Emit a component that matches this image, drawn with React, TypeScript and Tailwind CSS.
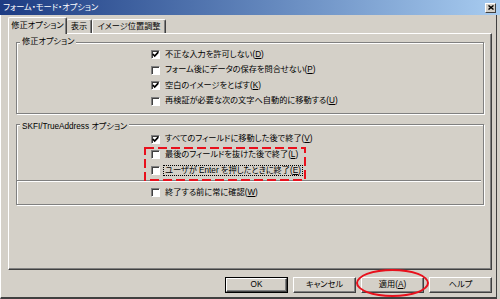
import React from "react";

const Check = ({ on }: { on?: boolean }) => (
  <span className="flex h-[9px] w-[9px] shrink-0 items-center justify-center border border-b-white border-l-[#808080] border-r-white border-t-[#808080] bg-white shadow-[inset_1px_1px_0_#404040]">
    {on && (
      <svg width="7" height="7" viewBox="0 0 7 7" className="block">
        <path d="M0.8 3 L2.7 5 L6.3 1.2" fill="none" stroke="#000" strokeWidth="1.7" />
      </svg>
    )}
  </span>
);

const Row = ({ on, children }: { on?: boolean; children: React.ReactNode }) => (
  <div className="flex h-[15.5px] items-center pl-[134px]">
    <Check on={on} />
    <span className="ml-[5px] whitespace-nowrap leading-[10px]">{children}</span>
  </div>
);

const U = ({ children }: { children: React.ReactNode }) => <span className="underline">{children}</span>;

const Group = ({ title, className, children }: { title: string; className: string; children: React.ReactNode }) => (
  <div className={className}>
    <div className="flex">
      <span className="-mt-[6px] ml-[3px] bg-[#d4d0c8] px-[2px] leading-[10px]">{title}</span>
    </div>
    {children}
  </div>
);

const Btn = ({ children, def }: { children: React.ReactNode; def?: boolean }) =>
  def ? (
    <div className="flex h-[16px] w-[63px] border border-black">
      <div className="flex flex-1 items-center justify-center border border-b-[#404040] border-l-white border-r-[#404040] border-t-white shadow-[inset_-1px_-1px_0_#808080]">
        {children}
      </div>
    </div>
  ) : (
    <div className="flex h-[16px] w-[63px] items-center justify-center border border-b-[#404040] border-l-white border-r-[#404040] border-t-white shadow-[inset_-1px_-1px_0_#808080]">
      {children}
    </div>
  );

export default function App() {
  return (
    <div className="flex h-[299px] w-[500px] flex-col overflow-hidden bg-[#d4d0c8] font-['Liberation_Sans','Noto_Sans_CJK_JP',sans-serif] text-[8.2px] leading-[10px] text-black [font-feature-settings:'palt']">
      {/* title bar */}
      <div className="flex h-[15px] shrink-0 items-center bg-linear-to-r from-[#1d3b82] to-[#a8ccf0] pl-[3px] pr-[4px]">
        <span className="text-white">フォーム・モード・オプション</span>
        <span className="ml-auto flex h-[10px] w-[11px] items-center justify-center border border-b-[#404040] border-l-white border-r-[#404040] border-t-white bg-[#d4d0c8]">
          <svg width="6" height="5" viewBox="0 0 6 5" className="block">
            <path d="M0.5 0.5 L5.5 4.5 M5.5 0.5 L0.5 4.5" stroke="#000" strokeWidth="1.4" />
          </svg>
        </span>
      </div>

      {/* body */}
      <div className="mr-[3px] flex flex-1 flex-col border-b-2 border-l border-r border-b-[#404040] border-l-white border-r-[#404040] pl-[7px] pr-[4px] pt-[2px]">
        {/* tabs */}
        <div className="flex h-[16px] shrink-0 items-end">
          <div className="relative z-10 -mb-[1px] flex h-[17px] w-[59px] items-center justify-center rounded-t-[2px] border-l border-r border-t border-l-white border-r-[#404040] border-t-white bg-[#d4d0c8] pb-[1px] shadow-[inset_-1px_0_0_#808080]">
            修正オプション
          </div>
          <div className="flex h-[14px] w-[25px] items-center justify-center rounded-t-[2px] border-r border-t border-r-[#404040] border-t-white shadow-[inset_-1px_0_0_#808080]">
            表示
          </div>
          <div className="flex h-[14px] w-[74px] items-center justify-center rounded-t-[2px] border-l border-r border-t border-l-white border-r-[#404040] border-t-white shadow-[inset_-1px_0_0_#808080]">
            イメージ位置調整
          </div>
        </div>

        {/* panel */}
        <div className="flex h-[237px] shrink-0 flex-col border border-b-[#404040] border-l-white border-r-[#404040] border-t-white px-[7px] shadow-[inset_-1px_-1px_0_#808080]">
          <Group
            title="修正オプション"
            className="mt-[8px] border border-[#808080] pb-[4px] shadow-[inset_1px_1px_0_#fff,1px_1px_0_#fff]"
          >
            <Row on>
              不正な入力を許可しない(<U>D</U>)
            </Row>
            <Row>
              フォーム後にデータの保存を問合せない(<U>P</U>)
            </Row>
            <Row on>
              空白のイメージをとばす(<U>K</U>)
            </Row>
            <Row>
              再検証が必要な次の文字へ自動的に移動する(<U>U</U>)
            </Row>
          </Group>

          <Group
            title="SKFI/TrueAddress オプション"
            className="mt-[10px] border border-[#808080] pb-[3.5px] pt-[2.5px] shadow-[inset_1px_1px_0_#fff,1px_1px_0_#fff]"
          >
            <Row on>
              すべてのフィールドに移動した後で終了(<U>V</U>)
            </Row>
            <div className="relative">
              <Row>
                最後のフィールドを抜けた後で終了(<U>L</U>)
              </Row>
              <div className="flex h-[15.5px] items-center pl-[134px]">
                <Check />
                <span className="ml-[4px] whitespace-nowrap px-[1px] leading-[9px] outline-1 outline-dotted outline-black">
                  ユーザが Enter を押したときに終了(<U>E</U>)
                </span>
              </div>
              <svg
                className="pointer-events-none absolute left-[127px] top-0"
                width="162"
                height="34"
                viewBox="0 0 162 34"
              >
                <rect x="1" y="1" width="160" height="32" fill="none" stroke="#e8101c" strokeWidth="2" strokeDasharray="9 4" />
              </svg>
            </div>
            <div className="mb-[3px] mr-[2px] mt-[2px] h-[2px] border-b border-t border-b-white border-t-[#808080]" />
            <Row>
              終了する前に常に確認(<U>W</U>)
            </Row>
          </Group>
        </div>

        {/* buttons */}
        <div className="mt-[7px] flex justify-end gap-[5px]">
          <Btn def>OK</Btn>
          <Btn>キャンセル</Btn>
          <div className="relative">
            <Btn>
              適用(<U>A</U>)
            </Btn>
            <div className="pointer-events-none absolute -left-[5px] -top-[8px] h-[28px] w-[73px] rounded-[50%] border-2 border-[#e8101c]" />
          </div>
          <Btn>ヘルプ</Btn>
        </div>
      </div>
    </div>
  );
}
